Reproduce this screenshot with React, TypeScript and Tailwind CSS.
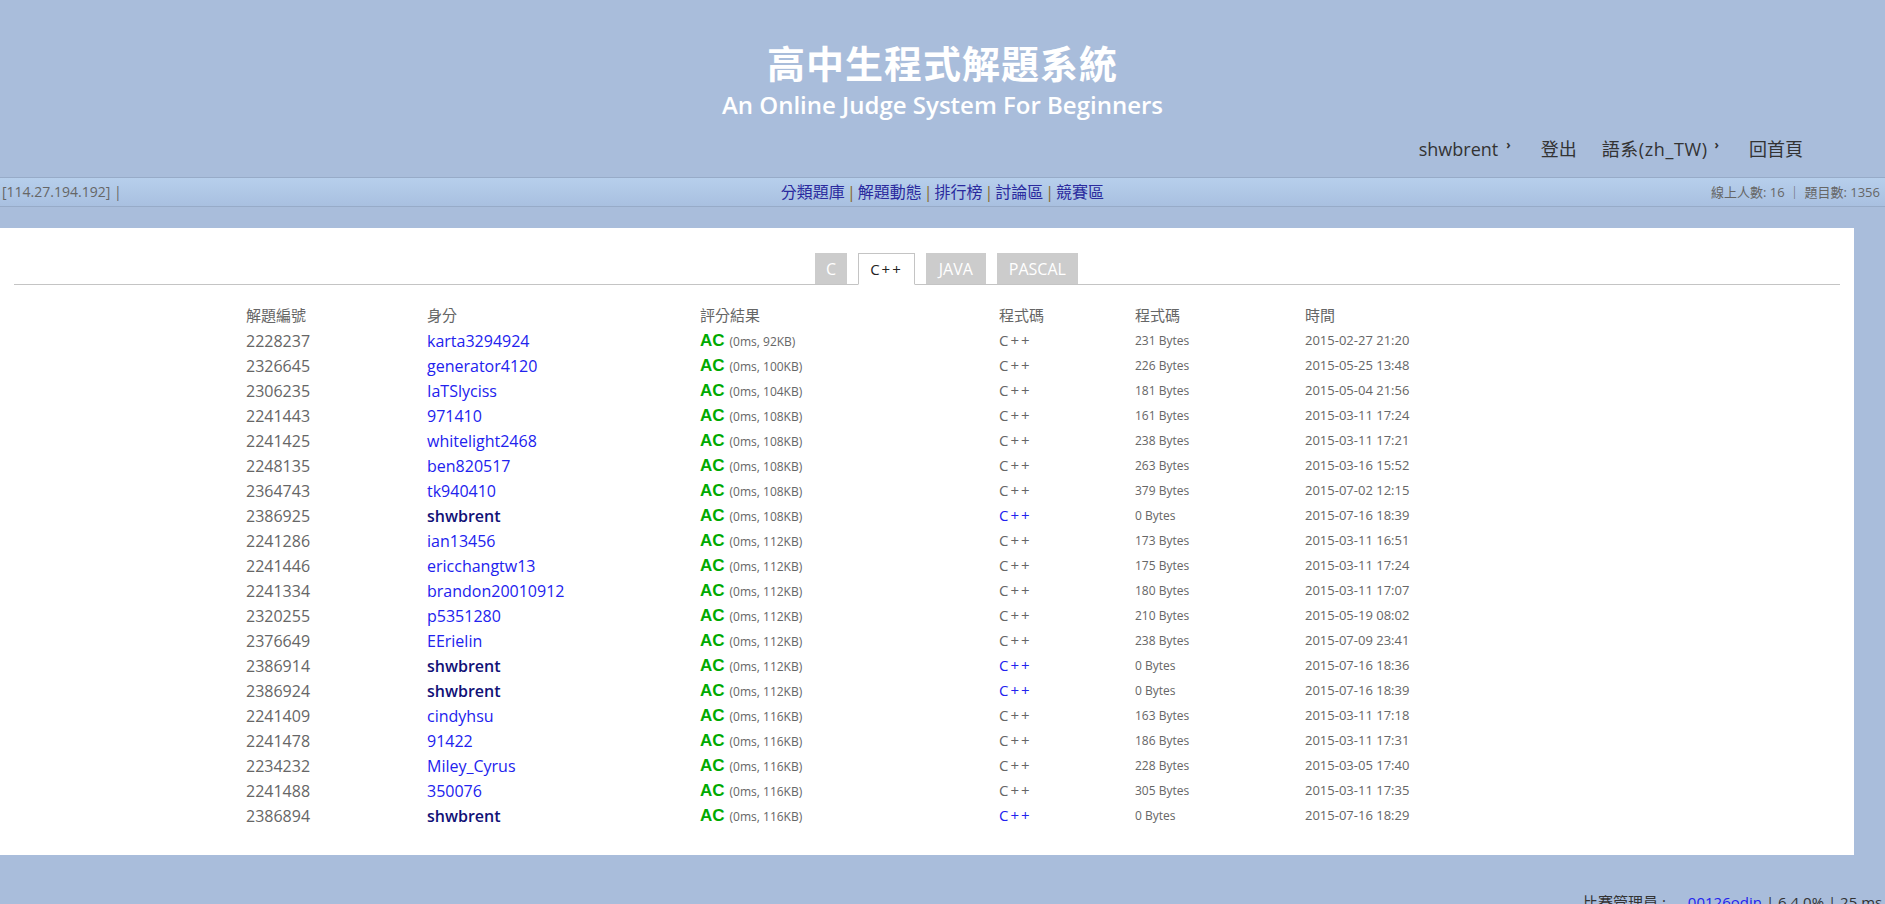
import React from "react";

type Row = {
  id: string;
  user: string;
  mem: string;
  bytes: string;
  time: string;
  own?: boolean;
};

const rows: Row[] = [
  { id: "2228237", user: "karta3294924", mem: "92KB", bytes: "231 Bytes", time: "2015-02-27 21:20" },
  { id: "2326645", user: "generator4120", mem: "100KB", bytes: "226 Bytes", time: "2015-05-25 13:48" },
  { id: "2306235", user: "IaTSlyciss", mem: "104KB", bytes: "181 Bytes", time: "2015-05-04 21:56" },
  { id: "2241443", user: "971410", mem: "108KB", bytes: "161 Bytes", time: "2015-03-11 17:24" },
  { id: "2241425", user: "whitelight2468", mem: "108KB", bytes: "238 Bytes", time: "2015-03-11 17:21" },
  { id: "2248135", user: "ben820517", mem: "108KB", bytes: "263 Bytes", time: "2015-03-16 15:52" },
  { id: "2364743", user: "tk940410", mem: "108KB", bytes: "379 Bytes", time: "2015-07-02 12:15" },
  { id: "2386925", user: "shwbrent", mem: "108KB", bytes: "0 Bytes", time: "2015-07-16 18:39", own: true },
  { id: "2241286", user: "ian13456", mem: "112KB", bytes: "173 Bytes", time: "2015-03-11 16:51" },
  { id: "2241446", user: "ericchangtw13", mem: "112KB", bytes: "175 Bytes", time: "2015-03-11 17:24" },
  { id: "2241334", user: "brandon20010912", mem: "112KB", bytes: "180 Bytes", time: "2015-03-11 17:07" },
  { id: "2320255", user: "p5351280", mem: "112KB", bytes: "210 Bytes", time: "2015-05-19 08:02" },
  { id: "2376649", user: "EErielin", mem: "112KB", bytes: "238 Bytes", time: "2015-07-09 23:41" },
  { id: "2386914", user: "shwbrent", mem: "112KB", bytes: "0 Bytes", time: "2015-07-16 18:36", own: true },
  { id: "2386924", user: "shwbrent", mem: "112KB", bytes: "0 Bytes", time: "2015-07-16 18:39", own: true },
  { id: "2241409", user: "cindyhsu", mem: "116KB", bytes: "163 Bytes", time: "2015-03-11 17:18" },
  { id: "2241478", user: "91422", mem: "116KB", bytes: "186 Bytes", time: "2015-03-11 17:31" },
  { id: "2234232", user: "Miley_Cyrus", mem: "116KB", bytes: "228 Bytes", time: "2015-03-05 17:40" },
  { id: "2241488", user: "350076", mem: "116KB", bytes: "305 Bytes", time: "2015-03-11 17:35" },
  { id: "2386894", user: "shwbrent", mem: "116KB", bytes: "0 Bytes", time: "2015-07-16 18:29", own: true },
];

const FONT = "font-['Open_Sans','Noto_Sans_CJK_TC',sans-serif]";
const GRID = "grid grid-cols-[181px_273px_299px_136px_170px_200px] items-center h-[25px]";

export default function App() {
  return (
    <div className={`h-[904px] w-[1885px] overflow-hidden bg-[#a9bddb] ${FONT}`}>
      {/* Header */}
      <div className="h-[177px] flex flex-col items-center">
        <div className="mt-[40px] h-[44px] flex items-center text-[38px] font-bold text-white leading-none font-['Noto_Sans_CJK_TC',serif] tracking-[1px]">
          高中生程式解題系統
        </div>
        <div className="mt-[6px] h-[30px] flex items-center text-[24px] font-semibold text-white leading-none">
          An Online Judge System For Beginners
        </div>
        <div className="self-stretch flex justify-end items-center h-[28px] mt-[15px] pr-[82px] text-[18px] text-[#333] leading-none">
          <span>shwbrent</span>
          <span className="text-[12px] ml-[8px] -mt-[8px] font-bold">›</span>
          <span className="ml-[30px]">登出</span>
          <span className="ml-[25px] tracking-[0.6px]">語系(zh_TW)</span>
          <span className="text-[12px] ml-[7px] -mt-[8px] font-bold">›</span>
          <span className="ml-[30px]">回首頁</span>
        </div>
      </div>

      {/* Nav bar */}
      <div className="h-[30px] border-y border-[#97abc8] bg-gradient-to-b from-[#b7cfec] to-[#a9c0e0] flex items-center justify-between px-[2px] leading-none">
        <div className="w-[400px] text-[14px] text-[#666]">[114.27.194.192] |</div>
        <div className="text-[16px] text-[#2a2a9e] flex items-center gap-[2px]">
          <span>分類題庫</span>
          <span className="text-[#8a6a2a]">|</span>
          <span>解題動態</span>
          <span className="text-[#8a6a2a]">|</span>
          <span>排行榜</span>
          <span className="text-[#8a6a2a]">|</span>
          <span>討論區</span>
          <span className="text-[#8a6a2a]">|</span>
          <span>競賽區</span>
        </div>
        <div className="w-[400px] text-right pr-[3px] text-[13px] text-[#666]">線上人數: 16 ｜ 題目數: 1356</div>
      </div>

      {/* Content panel */}
      <div className="mt-[21px] w-[1854px] h-[627px] bg-white pt-[25px]">
        <div className="mx-[14px] border-b border-[#c4c4c4] flex justify-center pl-[39px] gap-[11px] h-[32px] items-end">
          <div className="h-[31px] px-[11px] bg-[#cccccc] text-white text-[16px] flex items-center">C</div>
          <div className="h-[32px] px-[11px] bg-white border border-[#c4c4c4] border-b-white -mb-px text-[#222] text-[15px] flex items-center tracking-[2px]">
            C++
          </div>
          <div className="h-[31px] px-[13px] bg-[#cccccc] text-white text-[16px] flex items-center">JAVA</div>
          <div className="h-[31px] px-[12px] bg-[#cccccc] text-white text-[16px] flex items-center">PASCAL</div>
        </div>

        <div className="ml-[246px] mt-[18px] leading-none">
          <div className={`${GRID} text-[15px] text-[#666]`}>
            <div>解題編號</div>
            <div>身分</div>
            <div>評分結果</div>
            <div>程式碼</div>
            <div>程式碼</div>
            <div>時間</div>
          </div>
          {rows.map((r) => (
            <div key={r.id + r.time} className={GRID}>
              <div className="text-[16px] text-[#666]">{r.id}</div>
              <div className={r.own ? "text-[16px] font-semibold text-[#111177]" : "text-[16px] text-[#2222ee]"}>
                {r.user}
              </div>
              <div className="flex items-baseline">
                <span className="text-[17px] font-bold text-[#00aa00] font-['Liberation_Sans',sans-serif]">AC</span>
                <span className="ml-[5px] text-[12px] text-[#666]">(0ms, {r.mem})</span>
              </div>
              <div className={`text-[15px] tracking-[2px] ${r.own ? "text-[#2222ee]" : "text-[#666]"}`}>C++</div>
              <div className="text-[12px] text-[#666]">{r.bytes}</div>
              <div className="text-[13px] text-[#666]">{r.time}</div>
            </div>
          ))}
        </div>
      </div>

      {/* Footer */}
      <div className="mt-[40px] pl-[1583px] flex whitespace-nowrap text-[15px] text-[#333] leading-none">
        <span>比賽管理員 :</span>
        <span className="ml-[22px] text-[#2222ee]">00126odin</span>
        <span className="ml-[4px]">| 6.4.0% | 25 ms</span>
      </div>
    </div>
  );
}
